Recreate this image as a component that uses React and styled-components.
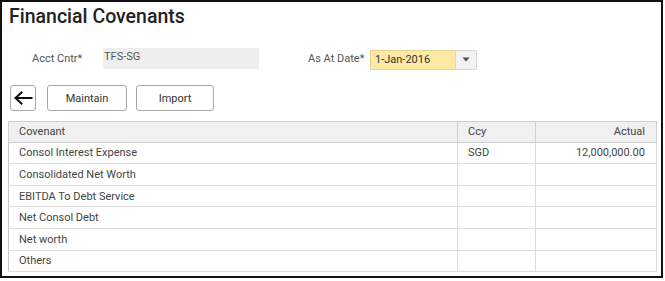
import React from "react";
import styled, { createGlobalStyle } from "styled-components";

const Global = createGlobalStyle`
  html, body { margin: 0; padding: 0; background: #ffffff; }
  body { font-family: Roboto, "Liberation Sans", Arial, sans-serif; }
`;

const Frame = styled.div`
  box-sizing: border-box;
  width: 663px;
  height: 278px;
  border: 2px solid #111;
  padding: 0 6px 0 6px;
  display: flex;
  flex-direction: column;
  background: #fff;
`;

const Title = styled.h1`
  margin: 2px 0 0 1px;
  font-size: 19.5px;
  line-height: 25px;
  font-weight: 500;
  color: #222;
`;

const FormRow = styled.div`
  display: flex;
  align-items: center;
  margin-top: 19px;
  height: 21px;
`;

const Label = styled.span`
  font-size: 11px;
  color: #555;
  width: ${(p) => p.$w}px;
  margin-left: ${(p) => p.$ml || 0}px;
  flex: none;
`;

const ReadOnly = styled.div`
  box-sizing: border-box;
  width: 156px;
  height: 21px;
  background: #eeeeee;
  font-size: 11px;
  color: #555;
  padding: 3px 0 0 1px;
  line-height: 12px;
`;

const DateBox = styled.div`
  display: flex;
  height: 20px;
  margin-top: 2px;
`;

const DateInput = styled.div`
  box-sizing: border-box;
  width: 85px;
  height: 20px;
  background: #fde9a4;
  border: 1px solid #e6d48e;
  border-right: none;
  border-radius: 2px 0 0 2px;
  font-size: 11px;
  color: #333;
  padding-left: 4px;
  line-height: 18px;
`;

const DropBtn = styled.div`
  box-sizing: border-box;
  width: 22px;
  height: 20px;
  background: #f2f2f2;
  border: 1px solid #d6d6d6;
  border-radius: 0 2px 2px 0;
  display: flex;
  align-items: center;
  justify-content: center;
`;

const ButtonRow = styled.div`
  display: flex;
  margin-top: 16px;
  margin-left: 2px;
  height: 26px;
`;

const Btn = styled.button`
  box-sizing: border-box;
  height: 26px;
  width: ${(p) => p.$w}px;
  margin-left: ${(p) => p.$ml || 0}px;
  background: #fff;
  border: 1px solid #a8a8a8;
  border-radius: 3px;
  font-family: Roboto, "Liberation Sans", Arial, sans-serif;
  font-size: 11px;
  color: #333;
  padding: 0;
  display: flex;
  align-items: center;
  justify-content: center;
`;

const Table = styled.table`
  margin-top: 10px;
  width: 648px;
  border-collapse: collapse;
  border: 1px solid #c6c6c6;
  font-size: 11px;
  color: #444;
  table-layout: fixed;
`;

const Th = styled.th`
  height: 19.6px;
  padding: 0 ${(p) => (p.$right ? "11px" : "0")} 0 10px;
  font-weight: 400;
  background: #f0f0f0;
  border: 1px solid #cfcfcf;
  text-align: ${(p) => (p.$right ? "right" : "left")};
  color: #444;
`;

const Td = styled.td`
  height: 20.6px;
  padding: 0 ${(p) => (p.$right ? "11px" : "0")} 0 10px;
  border: 1px solid #dcdcdc;
  border-left-color: ${(p) => (p.$first ? "#c6c6c6" : "#dcdcdc")};
  text-align: ${(p) => (p.$right ? "right" : "left")};
  white-space: nowrap;
`;

const rows = [
  ["Consol Interest Expense", "SGD", "12,000,000.00"],
  ["Consolidated Net Worth", "", ""],
  ["EBITDA To Debt Service", "", ""],
  ["Net Consol Debt", "", ""],
  ["Net worth", "", ""],
  ["Others", "", ""],
];

export default function App() {
  return (
    <>
      <Global />
      <Frame>
        <Title>Financial Covenants</Title>
        <FormRow>
          <Label $w={71} $ml={24}>Acct Cntr*</Label>
          <ReadOnly>TFS-SG</ReadOnly>
          <Label $w={62} $ml={49}>As At Date*</Label>
          <DateBox>
            <DateInput>1-Jan-2016</DateInput>
            <DropBtn>
              <svg width="8" height="5" viewBox="0 0 8 5">
                <path d="M0.5 0.5 L7.5 0.5 L4 4.5 Z" fill="#3f4f5f" />
              </svg>
            </DropBtn>
          </DateBox>
        </FormRow>
        <ButtonRow>
          <Btn $w={26} aria-label="Back">
            <svg width="20" height="16" viewBox="0 0 20 16">
              <path d="M2.5 8 H18.5 M8.5 2.5 L2.5 8 L8.5 13.5" fill="none" stroke="#111" strokeWidth="2" strokeLinecap="square" />
            </svg>
          </Btn>
          <Btn $w={80} $ml={11}>Maintain</Btn>
          <Btn $w={78} $ml={9}>Import</Btn>
        </ButtonRow>
        <Table>
          <colgroup>
            <col style={{ width: "449px" }} />
            <col style={{ width: "78px" }} />
            <col style={{ width: "121px" }} />
          </colgroup>
          <thead>
            <tr>
              <Th>Covenant</Th>
              <Th>Ccy</Th>
              <Th $right>Actual</Th>
            </tr>
          </thead>
          <tbody>
            {rows.map((r) => (
              <tr key={r[0]}>
                <Td $first>{r[0]}</Td>
                <Td>{r[1]}</Td>
                <Td $right>{r[2]}</Td>
              </tr>
            ))}
          </tbody>
        </Table>
      </Frame>
    </>
  );
}
